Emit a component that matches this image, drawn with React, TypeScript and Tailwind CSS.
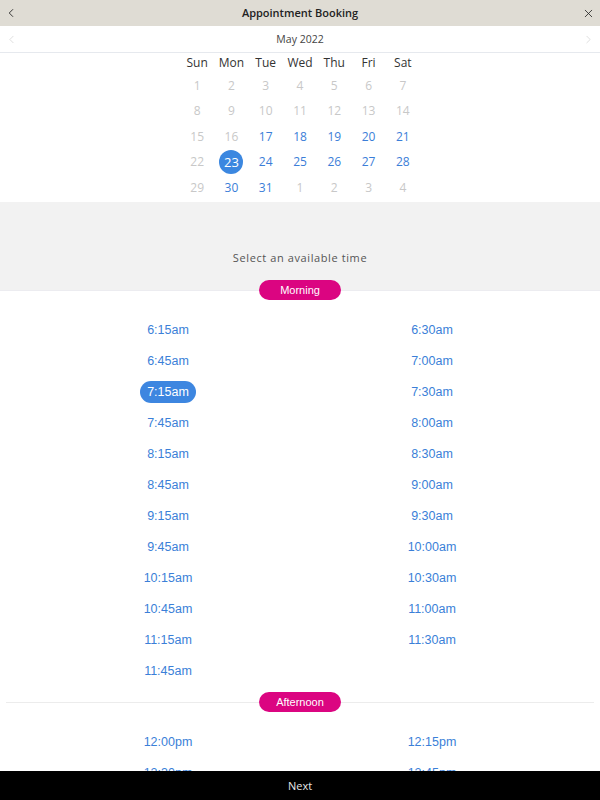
import { ChevronLeft, ChevronRight, X } from "lucide-react";

const WEEKDAYS = ["Sun", "Mon", "Tue", "Wed", "Thu", "Fri", "Sat"];

type Day = { n: number; state: "off" | "on" | "sel" };

const DAYS: Day[] = [
  ...Array.from({ length: 16 }, (_, i) => ({ n: i + 1, state: "off" as const })),
  ...[17, 18, 19, 20, 21].map((n) => ({ n, state: "on" as const })),
  { n: 22, state: "off" },
  { n: 23, state: "sel" },
  ...[24, 25, 26, 27, 28].map((n) => ({ n, state: "on" as const })),
  { n: 29, state: "off" },
  { n: 30, state: "on" },
  { n: 31, state: "on" },
  ...[1, 2, 3, 4].map((n) => ({ n, state: "off" as const })),
];

const MORNING = [
  "6:15am", "6:30am", "6:45am", "7:00am", "7:15am", "7:30am", "7:45am", "8:00am",
  "8:15am", "8:30am", "8:45am", "9:00am", "9:15am", "9:30am", "9:45am", "10:00am",
  "10:15am", "10:30am", "10:45am", "11:00am", "11:15am", "11:30am", "11:45am",
];

const AFTERNOON = ["12:00pm", "12:15pm", "12:30pm", "12:45pm", "1:00pm", "1:15pm"];

function Divider({ label, lineClass }: { label: string; lineClass: string }) {
  return (
    <div className={`flex h-px items-center justify-center ${lineClass}`}>
      <span className="flex h-5 w-[82px] shrink-0 items-center justify-center rounded-full bg-[#db0581] font-['Liberation_Sans',sans-serif] text-[11px] text-white">
        {label}
      </span>
    </div>
  );
}

function Slots({ times, selected }: { times: string[]; selected?: string }) {
  return (
    <div className="grid grid-cols-2 px-9 pt-[24px] pb-[15px] font-['Liberation_Sans',sans-serif]">
      {times.map((t) => (
        <div key={t} className="flex h-[31px] items-center justify-center">
          {t === selected ? (
            <span className="rounded-full bg-[#3d86e0] px-[7px] py-[2px] text-[12.5px] text-white">{t}</span>
          ) : (
            <span className="text-[12.5px] text-[#3b7fd8]">{t}</span>
          )}
        </div>
      ))}
    </div>
  );
}

export default function App() {
  return (
    <div className="flex h-[800px] w-[600px] flex-col overflow-hidden bg-white font-['Open_Sans',sans-serif]">
      <header className="flex h-[26px] shrink-0 items-center justify-between bg-[#dfdcd4] px-[4px] text-[#222]">
        <ChevronLeft size={14} strokeWidth={1.5} />
        <h1 className="text-[11px] font-semibold">Appointment Booking</h1>
        <X size={13} strokeWidth={1.5} className="mr-[1px]" />
      </header>

      <div className="flex-1 overflow-hidden">
        <div className="flex h-[27px] items-center justify-between border-b border-[#e6e9ee] px-[5px] pt-[1px] text-[#c4c4c4]">
          <ChevronLeft size={13} strokeWidth={1} />
          <span className="text-[10.5px] text-[#444]">May 2022</span>
          <ChevronRight size={13} strokeWidth={1} />
        </div>

        <div className="mx-auto grid w-[240px] grid-cols-7 pb-[1px] text-[12px]">
          {WEEKDAYS.map((d) => (
            <div key={d} className="flex h-5 items-center justify-center text-[#333]">
              {d}
            </div>
          ))}
          {DAYS.map((d, i) => (
            <div key={i} className="flex h-[25.5px] items-center justify-center">
              {d.state === "sel" ? (
                <span className="flex h-6 w-6 items-center justify-center rounded-full bg-[#3b87e0] text-[13px] text-white">
                  {d.n}
                </span>
              ) : (
                <span className={d.state === "on" ? "text-[#3b7ed8]" : "text-[#c8c8c8]"}>{d.n}</span>
              )}
            </div>
          ))}
        </div>

        <div className="flex h-[88px] items-end justify-center bg-[#f2f2f2] pb-[23px]">
          <p className="text-[11px] tracking-[0.6px] text-[#555]">Select an available time</p>
        </div>

        <Divider label="Morning" lineClass="bg-[#ececf0]" />
        <Slots times={MORNING} selected="7:15am" />

        <div className="px-[6px]">
          <Divider label="Afternoon" lineClass="bg-[#ececec]" />
        </div>
        <Slots times={AFTERNOON} />
      </div>

      <footer className="flex h-[29px] shrink-0 items-center justify-center bg-black pt-[1px] text-[11px] text-[#e6e6e6]">
        Next
      </footer>
    </div>
  );
}
